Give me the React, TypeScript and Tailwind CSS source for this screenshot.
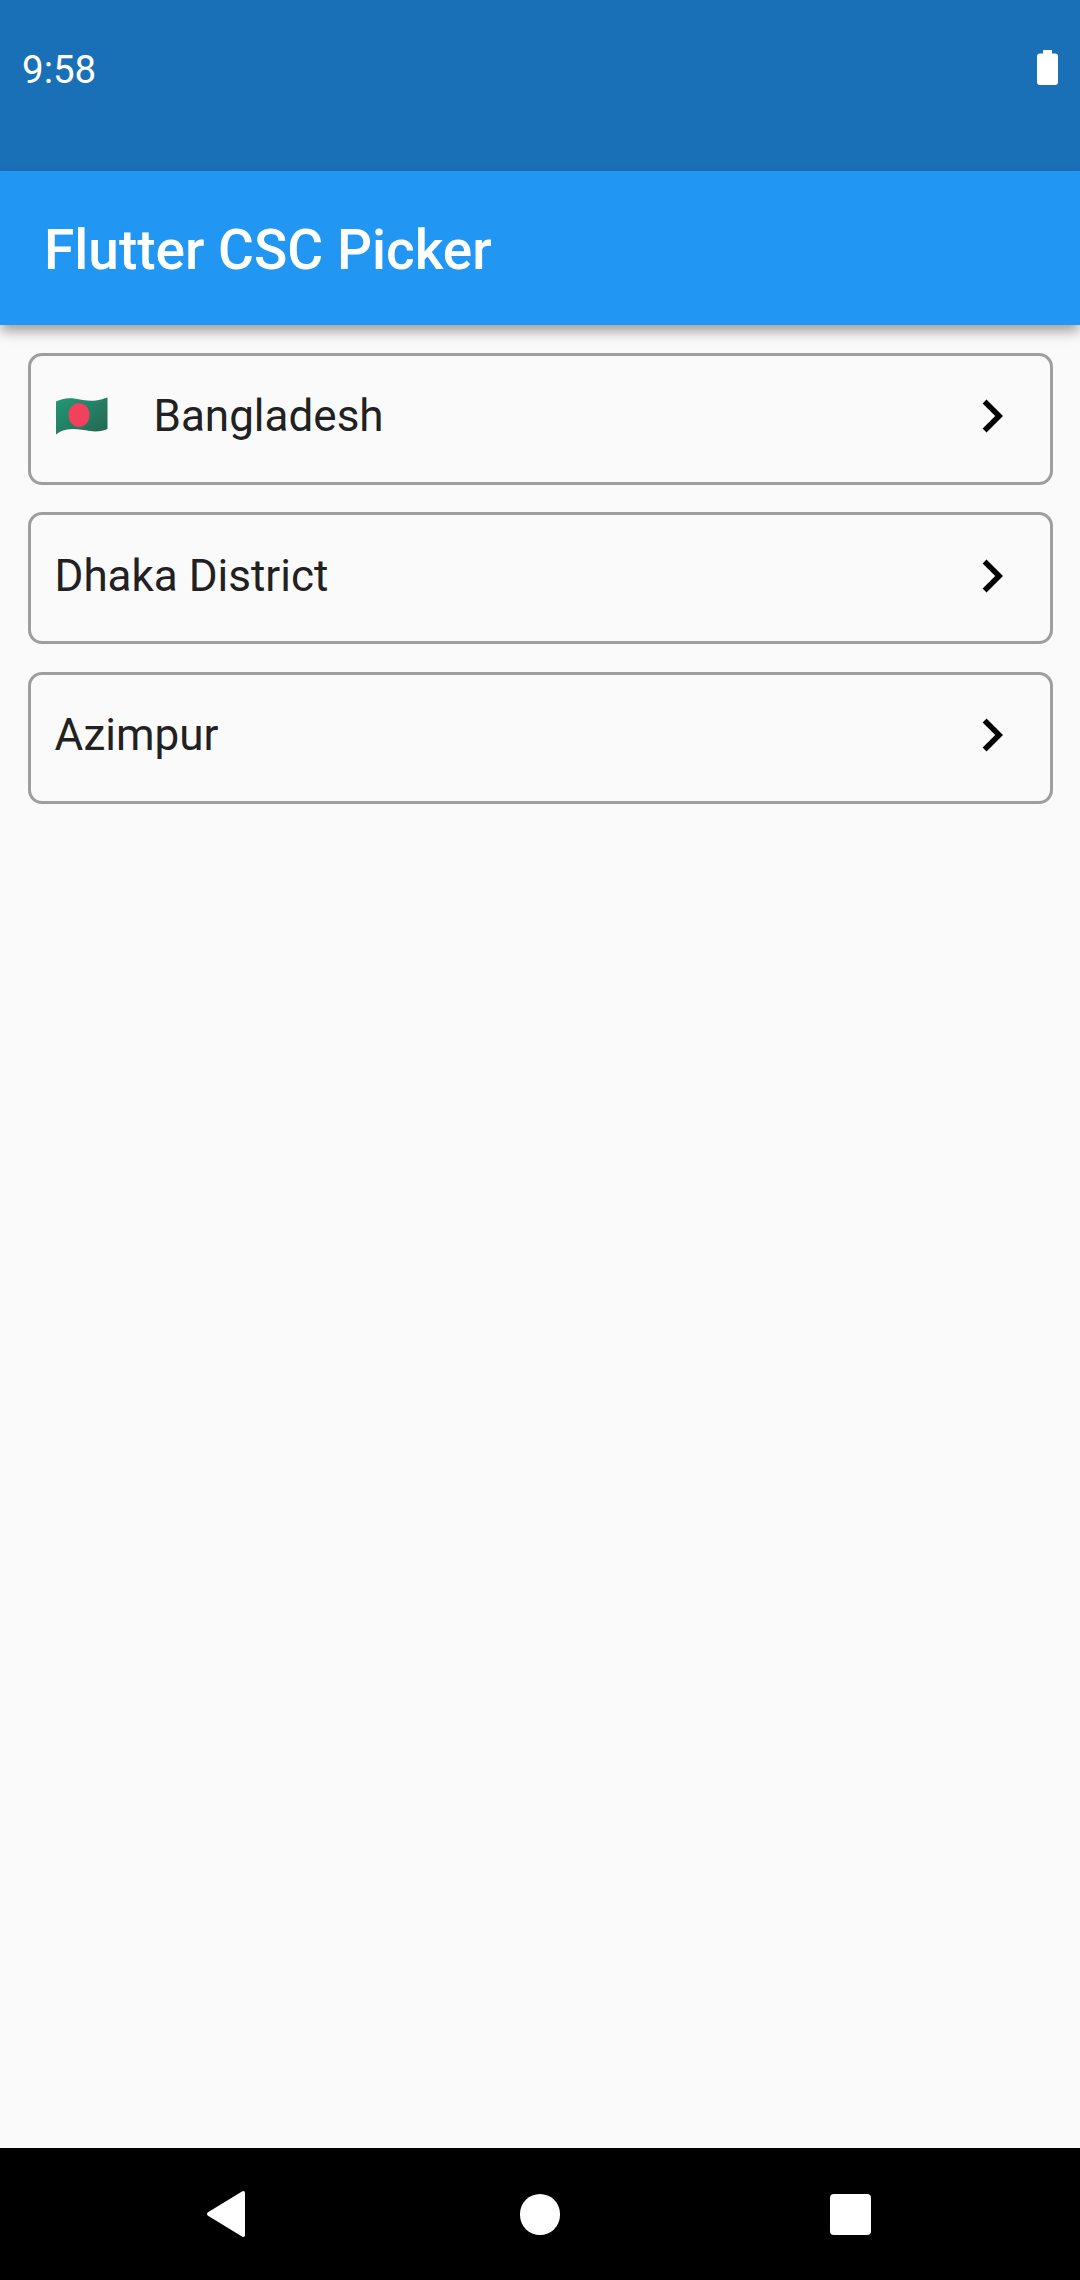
const cards = [
  { label: "Bangladesh", flag: true },
  { label: "Dhaka District", flag: false },
  { label: "Azimpur", flag: false },
];

function BdFlag() {
  return (
    <svg width="54" height="40" viewBox="0 0 54 40" className="mr-[45px] shrink-0">
      <defs>
        <linearGradient id="bd" x1="0" y1="0" x2="1" y2="1">
          <stop offset="0" stopColor="#1f9a78" />
          <stop offset="1" stopColor="#27644f" />
        </linearGradient>
      </defs>
      <path
        d="M1 5.500C6 3 12 1.500 19 2.500C27 4 34 5.500 41 4.500C45 4 49 2.500 52.500 1.500L52.500 33C48 35 42 36 35 35C27 33.500 19 32 12 33.500C8 34.300 4 36 1 38.500Z"
        fill="url(#bd)"
      />
      <ellipse cx="24" cy="19" rx="10.500" ry="12" fill="#f2415c" />
    </svg>
  );
}

function Card({ label, flag }: { label: string; flag: boolean }) {
  return (
    <div className="flex h-[132px] items-center rounded-[14px] border-[3px] border-[#9e9e9e] pb-[5px] pl-[24px] pr-[25px]">
      {flag && <BdFlag />}
      <span className="text-[44px] leading-[52px] text-[#212121]">{label}</span>
      <svg width="66" height="66" viewBox="0 0 24 24" className="ml-auto" fill="#000000">
        <path d="M10 6L8.59 7.41 13.17 12l-4.58 4.59L10 18l6-6z" />
      </svg>
    </div>
  );
}

export default function App() {
  return (
    <div className="flex h-[2280px] w-[1080px] flex-col overflow-hidden bg-[#fafafa] font-['Roboto',sans-serif]">
      <div className="flex h-[171px] shrink-0 items-center justify-between bg-[#1a70b6] pb-[32px] pl-[22px] pr-[22px] text-white">
        <span className="text-[38.500px] leading-[46px]">9:58</span>
        <svg width="21" height="35" viewBox="0 0 21 35" fill="#ffffff" className="mb-[4px]">
          <path d="M6 0h9v3.500h3a3 3 0 0 1 3 3V32a3 3 0 0 1-3 3H3a3 3 0 0 1-3-3V6.500a3 3 0 0 1 3-3h3z" />
        </svg>
      </div>
      <div className="relative z-10 flex h-[154px] shrink-0 items-center bg-[#2196f3] pl-[44px] pt-[3px] shadow-[0_7px_12px_-1px_rgba(0,0,0,0.38)]">
        <h1 className="text-[55px] font-medium leading-[64px] text-white">Flutter CSC Picker</h1>
      </div>
      <main className="flex flex-1 flex-col gap-[27.500px] px-[27.500px] pt-[27.500px]">
        {cards.map((c) => (
          <Card key={c.label} label={c.label} flag={c.flag} />
        ))}
      </main>
      <nav className="flex h-[132px] shrink-0 items-center bg-black pl-[207px]">
        <svg width="38" height="46" viewBox="0 0 38 46" fill="#ffffff">
          <path d="M35 .6c1.500-1.200 3-.3 3 1.400v42c0 1.700-1.500 2.600-3 1.400L1 24.800c-1.300-1-1.300-2.600 0-3.600z" />
        </svg>
        <div className="ml-[275px] h-[41px] w-[40px] rounded-full bg-white" />
        <div className="ml-[270px] h-[41px] w-[41px] rounded-[4px] bg-white" />
      </nav>
    </div>
  );
}
